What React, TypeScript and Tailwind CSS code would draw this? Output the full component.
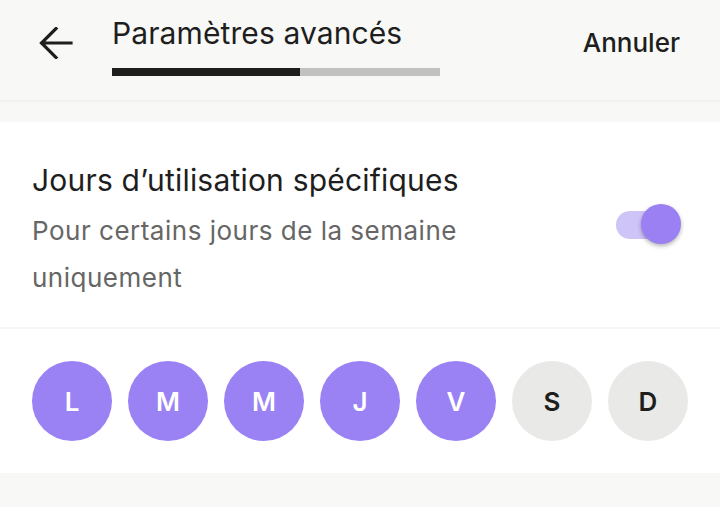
import { useState } from 'react';

const days = [
  { label: 'L', on: true },
  { label: 'M', on: true },
  { label: 'M', on: true },
  { label: 'J', on: true },
  { label: 'V', on: true },
  { label: 'S', on: false },
  { label: 'D', on: false },
];

function BackArrow() {
  return (
    <svg width="34" height="32" viewBox="0 0 34 32" fill="none" aria-hidden>
      <path
        d="M32 16H3M17 1.5L2.5 16L17 30.5"
        stroke="#1e1e1e"
        strokeWidth="3.2"
        strokeLinecap="square"
      />
    </svg>
  );
}

export default function App() {
  const [enabled, setEnabled] = useState(true);

  return (
    <div
      className="min-h-[507px] w-[720px] bg-[#f8f8f7] text-[#1e1e1e]"
      style={{ fontFamily: 'Inter, "Noto Sans", sans-serif' }}
    >
      {/* top bar with step progress */}
      <header className="relative z-10 flex h-[100px] items-start bg-[#f8f8f7] shadow-[0_2px_3px_rgba(0,0,0,0.04)]">
        <button type="button" className="ml-[39px] mt-[27px]">
          <BackArrow />
        </button>
        <div className="ml-[39px] mt-[15px] flex flex-col">
          <h1 className="text-[30px] leading-[36px] tracking-[0.1px]">Paramètres avancés</h1>
          <div className="mt-[17px] flex h-[8px] w-[328px] bg-[#c2c2c1]">
            <div className="h-full w-[188px] bg-[#1e1e1e]" />
          </div>
        </div>
        <button type="button" className="ml-auto mr-[40px] mt-[26px] text-[26px] font-medium leading-[34px]">
          Annuler
        </button>
      </header>

      <main className="mt-[22px] bg-white">
        <section className="flex h-[205px] items-center justify-between px-[32px]">
          <div className="self-start pt-[38px]">
            <h2 className="text-[30px] leading-[40px] tracking-[0.2px]">Jours d’utilisation spécifiques</h2>
            <p className="mt-[7px] w-[440px] text-[26px] leading-[47px] tracking-[0.5px] text-[#666665]">
              Pour certains jours de la semaine uniquement
            </p>
          </div>
          <button
            type="button"
            role="switch"
            aria-checked={enabled}
            onClick={() => setEnabled(!enabled)}
            className="relative mr-[16px] h-[28px] w-[56px] rounded-full bg-[#cfc4f8]"
          >
            <span className="absolute right-[-9px] top-[-7px] h-[40px] w-[40px] rounded-full bg-[#9a80f2] shadow-[0_2px_4px_rgba(0,0,0,0.3)]" />
          </button>
        </section>

        <div className="h-[2px] bg-[#f6f6f5]" />

        <div className="flex gap-[16px] px-[32px] pb-[32px] pt-[32px]">
          {days.map((d, i) => (
            <div
              key={i}
              className={
                d.on
                  ? 'flex h-[80px] w-[80px] items-center justify-center rounded-full bg-[#9b82f4] text-[26px] font-semibold text-white'
                  : 'flex h-[80px] w-[80px] items-center justify-center rounded-full bg-[#e9e9e7] text-[26px] font-semibold text-[#1e1e1e]'
              }
            >
              {d.label}
            </div>
          ))}
        </div>
      </main>
    </div>
  );
}
